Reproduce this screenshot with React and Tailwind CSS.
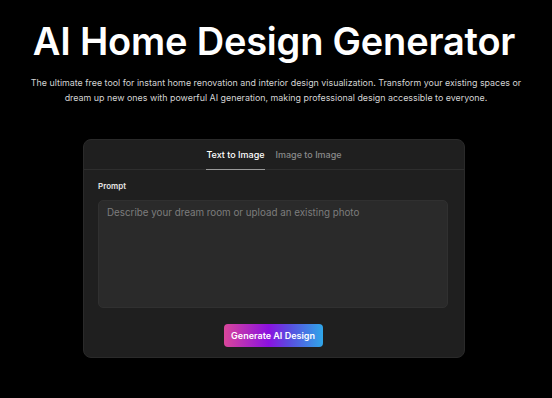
export default function App() {
  return (
    <div className="min-h-[398px] w-full bg-black text-white flex flex-col items-center" style={{ fontFamily: "Inter, 'Noto Sans', sans-serif" }}>
      <h1 className="mt-[18px] text-[38px] leading-[46px] font-semibold tracking-[-0.2px] text-white mr-[4px]">AI Home Design Generator</h1>
      <p className="mt-[11px] w-[500px] text-center text-[8.9px] leading-[15px] text-[#d4d4d4]">
        The ultimate free tool for instant home renovation and interior design visualization. Transform your existing spaces or dream up new ones with powerful AI generation, making professional design accessible to everyone.
      </p>
      <div className="mt-[34px] mr-[4px] w-[382px] rounded-[8px] border border-[#2a2a2a] bg-[#1f1f1f] flex flex-col">
        <div className="flex justify-center gap-[11px] border-b border-[#2e2e2e] h-[30px] pt-[1px]">
          <button className="relative px-0 text-[9px] font-medium text-white">
            Text to Image
            <span className="absolute left-0 right-0 bottom-[-1px] h-[1.5px] bg-[#9a9a9a]" />
          </button>
          <button className="text-[9px] font-medium text-[#8a8a8a]">Image to Image</button>
        </div>
        <div className="pl-[14px] pr-[16px] pt-[10px] pb-[10px] flex flex-col">
          <label className="text-[8px] font-semibold text-[#e5e5e5]">Prompt</label>
          <div className="mt-[8px] h-[108px] rounded-[5px] border border-[#303030] bg-[#2a2a2a] px-[8px] pt-[5px] text-[9.8px] text-[#7d7d7d]">
            Describe your dream room or upload an existing photo
          </div>
          <div className="mt-[16px] flex justify-center">
            <button className="h-[23px] w-[99px] rounded-[4px] text-[9px] font-semibold text-white bg-[linear-gradient(90deg,#d9469a_0%,#8b11e0_45%,#5b4ae0_65%,#2fa6e8_100%)]">
              Generate AI Design
            </button>
          </div>
        </div>
      </div>
    </div>
  );
}
